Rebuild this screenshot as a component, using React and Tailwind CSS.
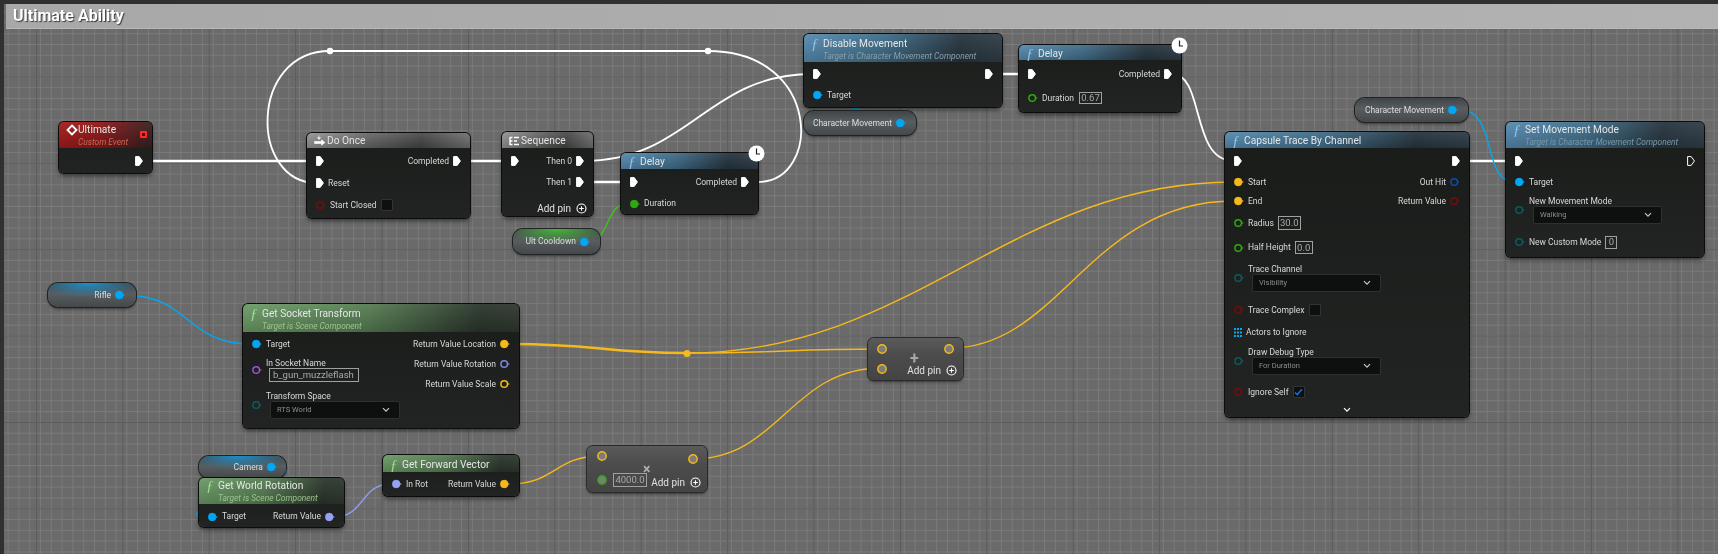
const Exec = ({ hollow }) => (
  <svg width="8" height="10" viewBox="0 0 8 10" className="shrink-0">
    <path
      d="M0.6 0.6H4.2L7.4 5L4.2 9.4H0.6Z"
      fill={hollow ? "none" : "#fff"}
      stroke="#fff"
      strokeWidth="1"
    />
  </svg>
);

const Pin = ({ color, hollow, fill }) => (
  <svg width="10" height="10" viewBox="0 0 10 10" className="shrink-0">
    <circle
      cx="4.2"
      cy="5"
      r={hollow ? 3.3 : 3.9}
      fill={hollow ? fill || "none" : color}
      stroke={color}
      strokeWidth={hollow ? 1.5 : 0.5}
    />
    <path d="M8.2 3.9L9.8 5L8.2 6.1Z" fill={color} />
  </svg>
);

const Ring = ({ color }) => (
  <svg width="10" height="10" viewBox="0 0 10 10" className="shrink-0">
    <circle cx="5" cy="5" r="4.2" fill="#7c7c7c" stroke={color} strokeWidth="1.4" />
  </svg>
);

const Fn = ({ className }) => (
  <span className={`w-[12px] font-['Liberation_Serif',serif] italic text-[15px] leading-[12px] ${className}`}>ƒ</span>
);

const AddPin = () => (
  <div className="flex items-center gap-[5px] text-[10px] text-[#e0e0e0]">
    <span>Add pin</span>
    <svg width="11" height="11" viewBox="0 0 11 11" className="shrink-0">
      <circle cx="5.5" cy="5.5" r="4.5" fill="none" stroke="#fff" strokeWidth="1.1" />
      <path d="M5.5 3.2V7.8M3.2 5.5H7.8" stroke="#fff" strokeWidth="1.1" />
    </svg>
  </div>
);

const Clock = ({ className }) => (
  <svg width="17" height="17" viewBox="0 0 17 17" className={`absolute z-10 ${className}`}>
    <circle cx="8.5" cy="8.5" r="8" fill="#fff" />
    <path d="M8.5 3.5V9H12" fill="none" stroke="#222" strokeWidth="1.2" />
  </svg>
);

const Chevron = ({ color = "#c8c8c8" }) => (
  <svg width="8" height="6" viewBox="0 0 8 6" className="shrink-0">
    <path d="M1 1.2L4 4.2L7 1.2" fill="none" stroke={color} strokeWidth="1.2" />
  </svg>
);

const Dropdown = ({ label, className }) => (
  <div className={`h-[18px] ml-[4px] flex items-center justify-between pl-[6px] pr-[9px] bg-[#0e0f0f] border border-[#2e2f2f] rounded-[2px] text-[7.5px] text-[#8c8c8c] ${className}`}>
    <span>{label}</span>
    <Chevron />
  </div>
);

const Box = ({ children, className }) => (
  <div className={`border border-[#a0a0a0] text-[#a8a8a8] flex items-center justify-center text-[9.5px] leading-none ${className}`}>
    {children}
  </div>
);

const Check = ({ checked, className }) => (
  <div className={`w-[12px] h-[12px] bg-[#0e0f0f] border border-[#333] rounded-[1px] flex items-center justify-center ${className}`}>
    {checked && (
      <svg width="9" height="8" viewBox="0 0 9 8">
        <path d="M1 4.5L3.2 6.6L8 1.2" fill="none" stroke="#0f6fe0" strokeWidth="1.6" />
      </svg>
    )}
  </div>
);

const Node = ({ className, children }) => (
  <div className={`absolute flex flex-col rounded-[5px] bg-[linear-gradient(180deg,#1a1c1a,#222423)] shadow-[0_0_0_1px_#0b0c0b,0_3px_4px_rgba(0,0,0,0.5)] text-[8.5px] text-[#d8d8d8] ${className}`}>
    {children}
  </div>
);

const Header = ({ tone, className, icon, title, sub, subColor }) => (
  <div className={`shrink-0 rounded-t-[5px] pl-[7px] ${tone} ${className}`}>
    <div className="flex items-center">
      {icon}
      <span className="text-[10.2px] leading-[12px] text-[#e2e6e6] whitespace-nowrap">{title}</span>
    </div>
    {sub && (
      <div className={`pl-[12px] italic text-[8.4px] leading-[12px] whitespace-nowrap ${subColor}`}>{sub}</div>
    )}
  </div>
);

const Row = ({ className, children }) => (
  <div className={`flex items-center justify-between px-[9px] whitespace-nowrap ${className}`}>{children}</div>
);

const Side = ({ children }) => <div className="flex items-center gap-[4px]">{children}</div>;

const Var = ({ className, glow, label, pr }) => (
  <div className={`absolute flex items-center justify-end rounded-[10px] shadow-[0_0_0_1px_#202224,0_2px_3px_rgba(0,0,0,0.5)] text-[8.5px] text-[#dcdcdc] ${glow} ${pr} ${className}`}>
    <span className="mr-[4px]">{label}</span>
    <Pin color="#00a8f4" />
  </div>
);

const BLUE = "bg-[linear-gradient(180deg,rgba(255,255,255,0.06),rgba(0,0,0,0.16)),linear-gradient(100deg,#568aaf_0%,#3f6c88_40%,#25343e_78%,#2f3d47_100%)]";
const GREEN = "bg-[linear-gradient(180deg,rgba(255,255,255,0.06),rgba(0,0,0,0.16)),linear-gradient(100deg,#6b9a66_0%,#557c51_45%,#2a352b_85%,#2e372e_100%)]";
const GREY = "bg-[linear-gradient(180deg,rgba(255,255,255,0.12),rgba(0,0,0,0.12)),linear-gradient(100deg,#8e8e8e_0%,#626262_35%,#3f3f3f_70%,#6a6a6a_100%)]";
const BLUE_F = "text-[#8ec4e8]";
const GREEN_F = "text-[#9fdc92]";
const TEAL = "#0b5c5c";
const RED = "#7c0a0a";
const LIME = "#2fa80f";
const YELLOW = "#f5b91c";
const TINT = "bg-[linear-gradient(180deg,#5a5a5a_0%,#4c4c4c_40%,#444_100%)]";
const DARK_VAR = "bg-[linear-gradient(180deg,#3f4448_0%,#585d60_45%,#44484b_100%)]";
const BLUE_VAR = "bg-[radial-gradient(ellipse_60%_60%_at_45%_0%,#1d8fc8,transparent),linear-gradient(180deg,#3f4448_0%,#585d60_45%,#44484b_100%)]";
const GREEN_VAR = "bg-[radial-gradient(ellipse_60%_60%_at_50%_0%,#46b83a,transparent),linear-gradient(180deg,#3f4448_0%,#585d60_45%,#44484b_100%)]";

const Wires = () => (
  <svg width="1718" height="554" viewBox="0 0 1718 554" fill="none" className="absolute inset-0">
    <g stroke="#fff" strokeWidth="2.6">
      <path d="M143 161H317" />
      <path d="M461 161H510" />
      <path d="M583 182H629" />
      <path d="M993 74H1029" />
      <path d="M1460 161H1515" />
    </g>
    <g stroke="#fff" strokeWidth="1.8">
      <path d="M583 161C690 161 706 74 813 74" />
      <path d="M758 182C822 182 822 51 708 51" />
      <path d="M330 51H708" />
      <path d="M317 183C249 183 249 51 330 51" />
      <path d="M1172 74C1205 74 1190 161 1234 161" />
    </g>
    <circle cx="330" cy="51" r="3.2" fill="#fff" />
    <circle cx="708" cy="51" r="3.2" fill="#fff" />
    <g stroke="#00a8f4" strokeWidth="1.4">
      <path d="M904 123C932 123 784 95 812 95" />
      <path d="M1457 109C1500 109 1480 182 1515 182" />
      <path d="M124 295C190 295 185 344 251 344" />
      <path d="M277 468C330 468 150 517 208 517" />
    </g>
    <path d="M334 517C365 517 360 484 391 484" stroke="#8f9ce8" strokeWidth="1.4" />
    <path d="M589 241C610 241 605 203 629 203" stroke="#3cc51a" strokeWidth="1.4" />
    <g stroke={YELLOW}>
      <path d="M510 344C600 344 600 353 687 353" strokeWidth="2.4" />
      <path d="M687 353C780 353 790 349 882 349" strokeWidth="1.4" />
      <path d="M687 353C915 353 1010 182 1234 182" strokeWidth="1.4" />
      <path d="M950 348C1060 348 1090 201 1234 201" strokeWidth="1.4" />
      <path d="M692 459C780 459 790 368 882 368" strokeWidth="1.4" />
      <path d="M510 484C555 484 555 456 601 456" strokeWidth="1.4" />
    </g>
    <circle cx="687" cy="353.5" r="3.6" fill={YELLOW} />
  </svg>
);

export default function App() {
  return (
    <div className="relative h-[554px] w-full overflow-hidden bg-[#303030] pl-[4px] pt-[4px] font-['Roboto',sans-serif] blur-[0.3px]">
      <div className="h-full bg-[#6a6a6a] pl-[2px] [background-image:linear-gradient(90deg,#5c5c5c_1px,transparent_1px),linear-gradient(180deg,#5c5c5c_1px,transparent_1px),linear-gradient(90deg,#7a7a7a_1px,transparent_1px),linear-gradient(180deg,#7a7a7a_1px,transparent_1px)] [background-size:86.4px_86.4px,86.4px_86.4px,10.8px_10.8px,10.8px_10.8px] [background-position:32px_72.4px,32px_72.4px,3.6px_7.6px,3.6px_7.6px]">
        <div className="h-[25px] flex items-center pl-[7px] bg-[linear-gradient(90deg,#a8a8a8,#b2b2b2)] border-b border-[#b8b8b8] text-[16px] font-bold text-white [text-shadow:1px_1px_1px_#3c3c3c]">
          Ultimate Ability
        </div>
      </div>

      <Wires />

      <Node className="left-[59px] top-[122px] w-[93px] h-[51px]">
        <Header
          tone="bg-[linear-gradient(180deg,rgba(255,255,255,0.05),rgba(0,0,0,0.18)),linear-gradient(100deg,#a81c1c_0%,#8c1818_45%,#4a1e1e_85%,#362222_100%)]"
          className="h-[26px] pt-[2px]"
          icon={
            <svg width="12" height="12" viewBox="0 0 12 12" className="shrink-0">
              <path d="M6 1.5L10.5 6L6 10.5L1.5 6Z" fill="none" stroke="#fff" strokeWidth="1.8" />
            </svg>
          }
          title="Ultimate"
          sub="Custom Event"
          subColor="text-[#c4685a]"
        />
        <div className="absolute left-[81px] top-[9px] w-[7px] h-[7px] bg-[#600] border-2 border-[#ff2a2a] rounded-[1px]" />
        <Row className="h-[22px] mt-[2px] justify-end">
          <Exec />
        </Row>
      </Node>

      <Node className="left-[307px] top-[133px] w-[163px] h-[85px]">
        <Header
          tone={GREY}
          className="h-[15px] pt-[2px]"
          icon={
            <svg width="12" height="12" viewBox="0 0 12 12" className="shrink-0 mr-[1px]">
              <path d="M5 0.5V3.5M3.4 2.4L5 4.4L6.6 2.4M0.5 6.5H7.5V4.8L11 7.5L7.5 10.2V8.5H0.5Z" fill="#fff" stroke="#fff" strokeWidth="0.6" />
            </svg>
          }
          title="Do Once"
        />
        <Row className="h-[22px] mt-[2px]">
          <Exec />
          <Side>
            Completed
            <Exec />
          </Side>
        </Row>
        <Row className="h-[22px]">
          <Side>
            <Exec />
            Reset
          </Side>
        </Row>
        <Row className="h-[22px]">
          <Side>
            <Pin color={RED} hollow />
            Start Closed
            <Check />
          </Side>
        </Row>
      </Node>

      <Node className="left-[502px] top-[132px] w-[91px] h-[84px]">
        <Header
          tone={GREY}
          className="h-[16px] pt-[3px]"
          icon={
            <svg width="12" height="10" viewBox="0 0 12 10" className="shrink-0">
              <path d="M1 1V9M1 1.5H3.5M1 5H3.5M1 8.5H3.5M5 1.5H10M5 5H8M5 8.5H10" stroke="#fff" strokeWidth="1.4" />
            </svg>
          }
          title="Sequence"
        />
        <Row className="h-[22px] mt-[2px]">
          <Exec />
          <Side>
            Then 0
            <Exec />
          </Side>
        </Row>
        <Row className="h-[20px] justify-end">
          <Side>
            Then 1
            <Exec />
          </Side>
        </Row>
        <Row className="h-[16px] mt-[8px] justify-end pr-[6px]">
          <AddPin />
        </Row>
      </Node>

      <Node className="left-[621px] top-[153px] w-[137px] h-[61px]">
        <Clock className="left-[127px] -top-[8px]" />
        <Header tone={BLUE} className="h-[16px] pt-[3px]" icon={<Fn className={BLUE_F} />} title="Delay" />
        <Row className="h-[22px] mt-[2px]">
          <Exec />
          <Side>
            Completed
            <Exec />
          </Side>
        </Row>
        <Row className="h-[21px]">
          <Side>
            <Pin color={LIME} />
            Duration
          </Side>
        </Row>
      </Node>

      <Var className="left-[513px] top-[229px] w-[87px] h-[25px]" glow={GREEN_VAR} label="Ult Cooldown" pr="pr-[10px]" />

      <Node className="left-[804px] top-[34px] w-[198px] h-[73px]">
        <Header
          tone={BLUE}
          className="h-[28px] pt-[4px]"
          icon={<Fn className={BLUE_F} />}
          title="Disable Movement"
          sub="Target is Character Movement Component"
          subColor="text-[#88a0a8]"
        />
        <Row className="h-[22px] mt-[1px]">
          <Exec />
          <Exec />
        </Row>
        <Row className="h-[20px]">
          <Side>
            <Pin color="#00a8f4" />
            Target
          </Side>
        </Row>
      </Node>

      <Var className="left-[804px] top-[111px] w-[112px] h-[24px]" glow={DARK_VAR} label="Character Movement" pr="pr-[10px]" />

      <Node className="left-[1019px] top-[45px] w-[162px] h-[67px]">
        <Clock className="left-[152px] -top-[8px]" />
        <Header tone={BLUE} className="h-[15px] pt-[3px]" icon={<Fn className={BLUE_F} />} title="Delay" />
        <Row className="h-[24px] mt-[2px]">
          <Exec />
          <Side>
            Completed
            <Exec />
          </Side>
        </Row>
        <Row className="h-[22px] mt-[1px]">
          <Side>
            <Pin color={LIME} hollow />
            Duration
            <Box className="w-[23px] h-[12px] ml-[1px]">0.67</Box>
          </Side>
        </Row>
      </Node>

      <Node className="left-[1225px] top-[132px] w-[244px] h-[285px]">
        <Header tone={BLUE} className="h-[16px] pt-[3px]" icon={<Fn className={BLUE_F} />} title="Capsule Trace By Channel" />
        <Row className="h-[22px] mt-[2px]">
          <Exec />
          <Exec />
        </Row>
        <Row className="h-[20px]">
          <Side>
            <Pin color={YELLOW} />
            Start
          </Side>
          <Side>
            Out Hit
            <Pin color="#0a4db0" hollow />
          </Side>
        </Row>
        <Row className="h-[18px]">
          <Side>
            <Pin color={YELLOW} />
            End
          </Side>
          <Side>
            Return Value
            <Pin color={RED} hollow />
          </Side>
        </Row>
        <Row className="h-[26px]">
          <Side>
            <Pin color={LIME} hollow />
            Radius
            <Box className="w-[23px] h-[14px]">30.0</Box>
          </Side>
        </Row>
        <Row className="h-[23px]">
          <Side>
            <Pin color={LIME} hollow />
            Half Height
            <Box className="w-[18px] h-[13px]">0.0</Box>
          </Side>
        </Row>
        <Row className="mt-[5px] justify-start gap-[4px]">
          <Pin color={TEAL} hollow />
          <div>
            <div className="h-[10px] leading-[10px]">Trace Channel</div>
            <Dropdown label="Visibility" className="w-[129px]" />
          </div>
        </Row>
        <Row className="h-[22px] mt-[7px]">
          <Side>
            <Pin color={RED} hollow />
            Trace Complex
            <Check />
          </Side>
        </Row>
        <Row className="h-[22px]">
          <div className="flex items-center gap-[4px]">
            <svg width="8" height="9" viewBox="0 0 8 9" className="shrink-0">
              <path d="M0 0H2V2H0ZM3 0H5V2H3ZM6 0H8V2H6ZM0 3.5H2V5.5H0ZM3 3.5H5V5.5H3ZM6 3.5H8V5.5H6ZM0 7H2V9H0ZM3 7H5V9H3ZM6 7H8V9H6Z" fill="#00a8f4" />
            </svg>
            Actors to Ignore
          </div>
        </Row>
        <Row className="mt-[4px] justify-start gap-[4px]">
          <Pin color={TEAL} hollow />
          <div>
            <div className="h-[10px] leading-[10px]">Draw Debug Type</div>
            <Dropdown label="For Duration" className="w-[129px]" />
          </div>
        </Row>
        <Row className="h-[22px] mt-[6px]">
          <Side>
            <Pin color={RED} hollow />
            Ignore Self
            <Check checked />
          </Side>
        </Row>
        <div className="flex justify-center h-[14px] pt-[4px]">
          <Chevron color="#fff" />
        </div>
      </Node>

      <Var className="left-[1355px] top-[98px] w-[113px] h-[24px]" glow={DARK_VAR} label="Character Movement" pr="pr-[10px]" />

      <Node className="left-[1506px] top-[122px] w-[198px] h-[135px]">
        <Header
          tone={BLUE}
          className="h-[26px] pt-[2px]"
          icon={<Fn className={BLUE_F} />}
          title="Set Movement Mode"
          sub="Target is Character Movement Component"
          subColor="text-[#7a98a8]"
        />
        <Row className="h-[22px] mt-[2px]">
          <Exec />
          <Exec hollow />
        </Row>
        <Row className="h-[20px]">
          <Side>
            <Pin color="#00a8f4" />
            Target
          </Side>
        </Row>
        <Row className="mt-[4px] justify-start gap-[4px]">
          <Pin color={TEAL} hollow />
          <div>
            <div className="h-[10px] leading-[10px]">New Movement Mode</div>
            <Dropdown label="Walking" className="w-[129px]" />
          </div>
        </Row>
        <Row className="h-[22px] mt-[7px]">
          <Side>
            <Pin color={TEAL} hollow />
            New Custom Mode
            <Box className="w-[12px] h-[13px]">0</Box>
          </Side>
        </Row>
      </Node>

      <Var className="left-[48px] top-[283px] w-[88px] h-[24px]" glow={BLUE_VAR} label="Rifle" pr="pr-[11px]" />

      <Node className="left-[243px] top-[304px] w-[276px] h-[124px]">
        <Header
          tone={GREEN}
          className="h-[28px] pt-[4px]"
          icon={<Fn className={GREEN_F} />}
          title="Get Socket Transform"
          sub="Target is Scene Component"
          subColor="text-[#9bc48f]"
        />
        <div className="flex justify-between pt-[2px] whitespace-nowrap">
          <div className="flex flex-col pl-[9px]">
            <div className="h-[20px] flex items-center gap-[4px]">
              <Pin color="#00a8f4" />
              Target
            </div>
            <div className="flex items-center gap-[4px] mt-[4px]">
              <Pin color="#a050d0" hollow />
              <div>
                <div className="h-[10px] leading-[10px]">In Socket Name</div>
                <Box className="w-[90px] h-[14px] ml-[3px] !justify-start pl-[3px]">b_gun_muzzleflash</Box>
              </div>
            </div>
            <div className="flex items-center gap-[4px] mt-[9px]">
              <Pin color={TEAL} hollow />
              <div>
                <div className="h-[10px] leading-[10px]">Transform Space</div>
                <Dropdown label="RTS World" className="w-[130px] ml-[3px]" />
              </div>
            </div>
          </div>
          <div className="flex flex-col items-end pr-[9px]">
            <div className="h-[20px] flex items-center gap-[4px]">
              Return Value Location
              <Pin color={YELLOW} />
            </div>
            <div className="h-[20px] flex items-center gap-[4px]">
              Return Value Rotation
              <Pin color="#7a8adf" hollow />
            </div>
            <div className="h-[20px] flex items-center gap-[4px]">
              Return Value Scale
              <Pin color={YELLOW} hollow />
            </div>
          </div>
        </div>
      </Node>

      <Var className="left-[199px] top-[456px] w-[87px] h-[22px]" glow={BLUE_VAR} label="Camera" pr="pr-[9px]" />

      <Node className="left-[199px] top-[478px] w-[145px] h-[49px]">
        <Header
          tone={GREEN}
          className="h-[26px] pt-[2px]"
          icon={<Fn className={GREEN_F} />}
          title="Get World Rotation"
          sub="Target is Scene Component"
          subColor="text-[#9bc48f]"
        />
        <Row className="h-[21px] mt-[2px]">
          <Side>
            <Pin color="#00a8f4" />
            Target
          </Side>
          <Side>
            Return Value
            <Pin color="#93a2f2" />
          </Side>
        </Row>
      </Node>

      <Node className="left-[383px] top-[455px] w-[136px] h-[41px]">
        <Header tone={GREEN} className="h-[17px] pt-[4px]" icon={<Fn className={GREEN_F} />} title="Get Forward Vector" />
        <Row className="h-[24px]">
          <Side>
            <Pin color="#93a2f2" />
            In Rot
          </Side>
          <Side>
            Return Value
            <Pin color={YELLOW} />
          </Side>
        </Row>
      </Node>

      <div className={`absolute left-[868px] top-[338px] w-[95px] h-[42px] rounded-[6px] shadow-[0_0_0_1px_#2a2a2a,0_2px_3px_rgba(0,0,0,0.5)] flex justify-between px-[9px] pt-[6px] pb-[2px] ${TINT}`}>
        <div className="flex flex-col gap-[10px]">
          <Ring color={YELLOW} />
          <Ring color={YELLOW} />
        </div>
        <div className="flex flex-col items-end justify-between -mr-[3px]">
          <div className="mr-[3px]">
            <Ring color={YELLOW} />
          </div>
          <AddPin />
        </div>
        <span className="absolute left-[42px] top-[11px] text-[16px] leading-[20px] font-bold text-[#a8a8a8]">+</span>
      </div>

      <div className={`absolute left-[587px] top-[446px] w-[120px] h-[46px] rounded-[6px] shadow-[0_0_0_1px_#2a2a2a,0_2px_3px_rgba(0,0,0,0.5)] flex justify-between pl-[10px] pr-[6px] pt-[5px] pb-[2px] ${TINT}`}>
        <div className="flex flex-col gap-[12px]">
          <Ring color={YELLOW} />
          <div className="flex items-center gap-[6px]">
            <Ring color={LIME} />
            <Box className="w-[34px] h-[14px]">4000.0</Box>
          </div>
        </div>
        <div className="flex flex-col items-end justify-between">
          <div className="mt-[3px] mr-[3px]">
            <Ring color={YELLOW} />
          </div>
          <AddPin />
        </div>
        <span className="absolute left-[56px] top-[19px] text-[14px] leading-[8px] font-bold text-[#b0b0b0]">×</span>
      </div>
    </div>
  );
}
